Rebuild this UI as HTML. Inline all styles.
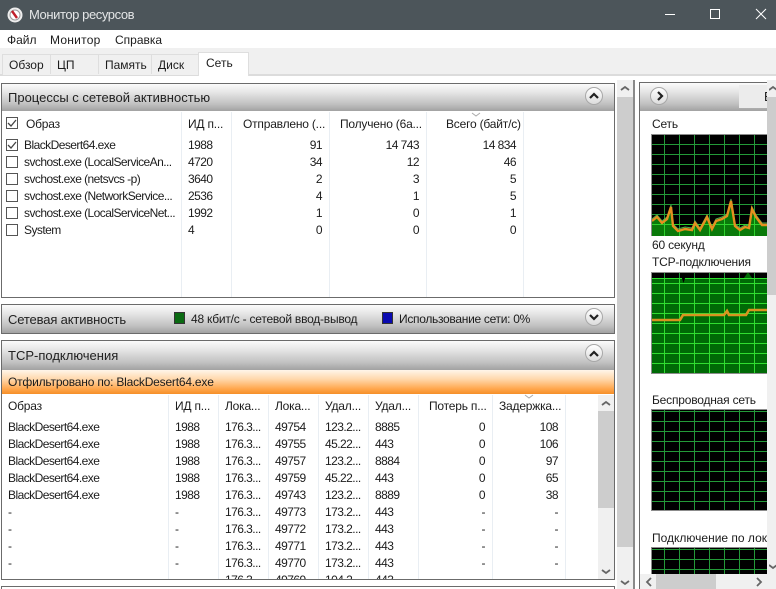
<!DOCTYPE html>
<html style="overflow:hidden;height:589px"><head><meta charset="utf-8"><style>
html,body{margin:0;padding:0}
body{width:776px;height:589px;position:relative;overflow:hidden;background:#fff;font-family:"Liberation Sans",sans-serif;font-size:12px;color:#1c1c1c}
div,span,svg{position:absolute}
#r{left:0;top:0;width:776px;height:589px;overflow:hidden;background:#fff}
.t{white-space:nowrap;line-height:16px;letter-spacing:-.2px}
.rows{left:0;top:0}
.rows .t{letter-spacing:-.55px}
.h{background:linear-gradient(#fbfbfb 0,#e6e6e6 30%,#c0c0c0 75%,#a2a2a2 100%)}
.p{border:1px solid #6b6b6b;box-sizing:border-box;background:#fff}
.ti{font-size:13px;color:#222;white-space:nowrap;line-height:18px}
.sep{width:1px;background:#e9eef3}
.cb{width:12px;height:12px;box-sizing:border-box;border:1px solid #555;background:#fff;left:6px}
.btn{width:18px;height:18px;box-sizing:border-box;border-radius:50%;border:1px solid #a8a8a8;background:linear-gradient(#fff,#dcdcdc)}
.tab{line-height:16px;white-space:nowrap;font-size:12px}
.gd{box-sizing:border-box;background-color:#000;background-image:linear-gradient(90deg,#239a38 1px,transparent 1px),linear-gradient(#239a38 1px,transparent 1px);background-size:15px 10px,15px 10px}
.gg{background-color:#006a06;background-image:linear-gradient(90deg,#30de30 1px,transparent 1px),linear-gradient(#30de30 1px,transparent 1px);background-size:15px 10px,15px 10px}
</style></head><body><div id="r">

<div style="left:0;top:0;width:776px;height:30px;background:#4c555a"></div>
<svg style="left:7px;top:7px" width="16" height="16" viewBox="0 0 16 16"><circle cx="8" cy="8" r="7.5" fill="#eee"/><circle cx="8" cy="8" r="5" fill="#fff" stroke="#999"/><path d="M5 4L10 11" stroke="#c0202a" stroke-width="2.4"/></svg>
<div class="t" style="left:29px;top:7px;color:#e4e6e7;font-size:13px;letter-spacing:-.42px">Монитор ресурсов</div>
<div style="left:665px;top:14px;width:10px;height:1px;background:#fff"></div>
<div style="left:710px;top:9px;width:8px;height:8px;border:1px solid #fff"></div>
<svg style="left:755px;top:8px" width="12" height="12" viewBox="0 0 12 12"><path d="M1 1L11 11M11 1L1 11" stroke="#fff" stroke-width="1"/></svg>

<div class="t" style="left:7px;top:32px;letter-spacing:0">Файл</div>
<div class="t" style="left:50px;top:32px;letter-spacing:.25px">Монитор</div>
<div class="t" style="left:115px;top:32px;letter-spacing:0">Справка</div>

<div style="left:0;top:48px;width:776px;height:27px;background:#f0f0f0"></div>
<div style="left:0;top:74px;width:776px;height:2px;background:#dcdcdc"></div>
<div style="left:2px;top:54px;width:197px;height:20px;background:#f0f0f0;border:1px solid #dedede;border-bottom:0"></div>
<div style="left:50px;top:55px;width:1px;height:19px;background:#dedede"></div>
<div style="left:98px;top:55px;width:1px;height:19px;background:#dedede"></div>
<div style="left:151px;top:55px;width:1px;height:19px;background:#dedede"></div>
<div style="left:198px;top:52px;width:51px;height:24px;background:#fff;border:1px solid #dedede;border-bottom:0;box-sizing:border-box"></div>
<div class="tab" style="left:9px;top:57px">Обзор</div>
<div class="tab" style="left:57px;top:57px">ЦП</div>
<div class="tab" style="left:105px;top:57px">Память</div>
<div class="tab" style="left:158px;top:57px">Диск</div>
<div class="tab" style="left:206px;top:55px">Сеть</div>

<!-- panel 1 -->
<div class="p" style="left:1px;top:83px;width:614px;height:215px"></div>
<div class="h" style="left:2px;top:84px;width:612px;height:27px"></div>
<div class="ti" style="left:8px;top:89px">Процессы с сетевой активностью</div>
<div class="btn" style="left:585px;top:87px"></div>
<svg style="left:588px;top:91px" width="12" height="9" viewBox="0 0 12 9"><path d="M2 7L6 3L10 7" fill="none" stroke="#222" stroke-width="2.2"/></svg>
<div class="sep" style="left:181px;top:112px;height:185px"></div>
<div class="sep" style="left:231px;top:112px;height:185px"></div>
<div class="sep" style="left:329px;top:112px;height:185px"></div>
<div class="sep" style="left:426px;top:112px;height:185px"></div>
<div class="sep" style="left:523px;top:112px;height:185px"></div>

<div class="cb" style="top:117px"></div>
<svg style="left:6px;top:117px" width="12" height="12" viewBox="0 0 12 12"><path d="M2 6L5 9L10 3" fill="none" stroke="#444" stroke-width="1.3"/></svg>
<div class="t" style="left:26px;top:116px">Образ</div>
<div class="t" style="left:188px;top:116px">ИД п...</div>
<div class="t" style="left:243px;top:116px">Отправлено (...</div>
<div class="t" style="left:340px;top:116px">Получено (6а...</div>
<div class="t" style="left:446px;top:116px">Всего (байт/с)</div>
<svg style="left:471px;top:112px" width="10" height="5"><path d="M1 1L5 4L9 1" fill="none" stroke="#aaa"/></svg>

<div class="cb" style="top:139px"></div>
<svg style="left:6px;top:139px" width="12" height="12" viewBox="0 0 12 12"><path d="M2 6L5 9L10 3" fill="none" stroke="#444" stroke-width="1.3"/></svg>
<div class="cb" style="top:156px"></div>
<div class="cb" style="top:173px"></div>
<div class="cb" style="top:190px"></div>
<div class="cb" style="top:207px"></div>
<div class="cb" style="top:224px"></div>

<div class="rows">
<div class="t" style="left:24px;top:137px">BlackDesert64.exe</div><div class="t" style="left:188px;top:137px">1988</div>
<div class="t" style="left:300px;width:22px;text-align:right;top:137px">91</div><div class="t" style="left:379px;width:40px;text-align:right;top:137px">14 743</div><div class="t" style="left:476px;width:40px;text-align:right;top:137px">14 834</div>
<div class="t" style="left:24px;top:154px">svchost.exe (LocalServiceAn...</div><div class="t" style="left:188px;top:154px">4720</div>
<div class="t" style="left:300px;width:22px;text-align:right;top:154px">34</div><div class="t" style="left:379px;width:40px;text-align:right;top:154px">12</div><div class="t" style="left:476px;width:40px;text-align:right;top:154px">46</div>
<div class="t" style="left:24px;top:171px">svchost.exe (netsvcs -p)</div><div class="t" style="left:188px;top:171px">3640</div>
<div class="t" style="left:300px;width:22px;text-align:right;top:171px">2</div><div class="t" style="left:379px;width:40px;text-align:right;top:171px">3</div><div class="t" style="left:476px;width:40px;text-align:right;top:171px">5</div>
<div class="t" style="left:24px;top:188px">svchost.exe (NetworkService...</div><div class="t" style="left:188px;top:188px">2536</div>
<div class="t" style="left:300px;width:22px;text-align:right;top:188px">4</div><div class="t" style="left:379px;width:40px;text-align:right;top:188px">1</div><div class="t" style="left:476px;width:40px;text-align:right;top:188px">5</div>
<div class="t" style="left:24px;top:205px">svchost.exe (LocalServiceNet...</div><div class="t" style="left:188px;top:205px">1992</div>
<div class="t" style="left:300px;width:22px;text-align:right;top:205px">1</div><div class="t" style="left:379px;width:40px;text-align:right;top:205px">0</div><div class="t" style="left:476px;width:40px;text-align:right;top:205px">1</div>
<div class="t" style="left:24px;top:222px">System</div><div class="t" style="left:188px;top:222px">4</div>
<div class="t" style="left:300px;width:22px;text-align:right;top:222px">0</div><div class="t" style="left:379px;width:40px;text-align:right;top:222px">0</div><div class="t" style="left:476px;width:40px;text-align:right;top:222px">0</div>
</div>

<!-- panel 2 -->
<div class="p" style="left:1px;top:304px;width:614px;height:30px"></div>
<div class="h" style="left:2px;top:305px;width:612px;height:28px"></div>
<div class="ti" style="left:8px;top:311px;letter-spacing:-.15px">Сетевая активность</div>
<div style="left:174px;top:312px;width:11px;height:12px;background:#0a6a12;border:1px solid #333;box-sizing:border-box"></div>
<div class="t" style="left:191px;top:311px;letter-spacing:-.23px">48 кбит/с - сетевой ввод-вывод</div>
<div style="left:382px;top:312px;width:11px;height:12px;background:#0a0ab0;border:1px solid #333;box-sizing:border-box"></div>
<div class="t" style="left:399px;top:311px;letter-spacing:-.3px">Использование сети: 0%</div>
<div class="btn" style="left:585px;top:308px"></div>
<svg style="left:588px;top:313px" width="12" height="9" viewBox="0 0 12 9"><path d="M2 2L6 6L10 2" fill="none" stroke="#222" stroke-width="2.2"/></svg>

<!-- panel 3 -->
<div class="p" style="left:1px;top:340px;width:614px;height:240px"></div>
<div class="h" style="left:2px;top:341px;width:612px;height:29px"></div>
<div class="ti" style="left:8px;top:347px">TCP-подключения</div>
<div class="btn" style="left:585px;top:344px"></div>
<svg style="left:588px;top:349px" width="12" height="9" viewBox="0 0 12 9"><path d="M2 7L6 3L10 7" fill="none" stroke="#222" stroke-width="2.2"/></svg>
<div style="left:2px;top:370px;width:612px;height:24px;background:linear-gradient(#fff6ea 0,#ffd6a8 40%,#ffa54a 80%,#f58f28 100%)"></div>
<div class="t" style="left:8px;top:374px">Отфильтровано по: BlackDesert64.exe</div>

<div class="sep" style="left:168px;top:395px;height:184px"></div>
<div class="sep" style="left:218px;top:395px;height:184px"></div>
<div class="sep" style="left:268px;top:395px;height:184px"></div>
<div class="sep" style="left:318px;top:395px;height:184px"></div>
<div class="sep" style="left:368px;top:395px;height:184px"></div>
<div class="sep" style="left:418px;top:395px;height:184px"></div>
<div class="sep" style="left:492px;top:395px;height:184px"></div>
<div class="sep" style="left:565px;top:395px;height:184px"></div>

<div class="t" style="left:8px;top:398px">Образ</div>
<div class="t" style="left:175px;top:398px">ИД п...</div>
<div class="t" style="left:225px;top:398px">Лока...</div>
<div class="t" style="left:275px;top:398px">Лока...</div>
<div class="t" style="left:325px;top:398px">Удал...</div>
<div class="t" style="left:375px;top:398px">Удал...</div>
<div class="t" style="left:429px;top:398px">Потерь п...</div>
<div class="t" style="left:499px;top:398px">Задержка...</div>
<svg style="left:524px;top:394px" width="10" height="5"><path d="M1 1L5 4L9 1" fill="none" stroke="#aaa"/></svg>

<div class="rows" style="left:2px;top:395px;width:596px;height:184px;overflow:hidden">
<div class="t" style="left:6px;top:24px">BlackDesert64.exe</div><div class="t" style="left:173px;top:24px">1988</div><div class="t" style="left:223px;top:24px">176.3...</div><div class="t" style="left:273px;top:24px">49754</div><div class="t" style="left:323px;top:24px">123.2...</div><div class="t" style="left:373px;top:24px">8885</div><div class="t" style="right:113px;top:24px">0</div><div class="t" style="right:40px;top:24px">108</div>
<div class="t" style="left:6px;top:41px">BlackDesert64.exe</div><div class="t" style="left:173px;top:41px">1988</div><div class="t" style="left:223px;top:41px">176.3...</div><div class="t" style="left:273px;top:41px">49755</div><div class="t" style="left:323px;top:41px">45.22...</div><div class="t" style="left:373px;top:41px">443</div><div class="t" style="right:113px;top:41px">0</div><div class="t" style="right:40px;top:41px">106</div>
<div class="t" style="left:6px;top:58px">BlackDesert64.exe</div><div class="t" style="left:173px;top:58px">1988</div><div class="t" style="left:223px;top:58px">176.3...</div><div class="t" style="left:273px;top:58px">49757</div><div class="t" style="left:323px;top:58px">123.2...</div><div class="t" style="left:373px;top:58px">8884</div><div class="t" style="right:113px;top:58px">0</div><div class="t" style="right:40px;top:58px">97</div>
<div class="t" style="left:6px;top:75px">BlackDesert64.exe</div><div class="t" style="left:173px;top:75px">1988</div><div class="t" style="left:223px;top:75px">176.3...</div><div class="t" style="left:273px;top:75px">49759</div><div class="t" style="left:323px;top:75px">45.22...</div><div class="t" style="left:373px;top:75px">443</div><div class="t" style="right:113px;top:75px">0</div><div class="t" style="right:40px;top:75px">65</div>
<div class="t" style="left:6px;top:92px">BlackDesert64.exe</div><div class="t" style="left:173px;top:92px">1988</div><div class="t" style="left:223px;top:92px">176.3...</div><div class="t" style="left:273px;top:92px">49743</div><div class="t" style="left:323px;top:92px">123.2...</div><div class="t" style="left:373px;top:92px">8889</div><div class="t" style="right:113px;top:92px">0</div><div class="t" style="right:40px;top:92px">38</div>
<div class="t" style="left:6px;top:109px">-</div><div class="t" style="left:173px;top:109px">-</div><div class="t" style="left:223px;top:109px">176.3...</div><div class="t" style="left:273px;top:109px">49773</div><div class="t" style="left:323px;top:109px">173.2...</div><div class="t" style="left:373px;top:109px">443</div><div class="t" style="right:113px;top:109px">-</div><div class="t" style="right:40px;top:109px">-</div>
<div class="t" style="left:6px;top:126px">-</div><div class="t" style="left:173px;top:126px">-</div><div class="t" style="left:223px;top:126px">176.3...</div><div class="t" style="left:273px;top:126px">49772</div><div class="t" style="left:323px;top:126px">173.2...</div><div class="t" style="left:373px;top:126px">443</div><div class="t" style="right:113px;top:126px">-</div><div class="t" style="right:40px;top:126px">-</div>
<div class="t" style="left:6px;top:143px">-</div><div class="t" style="left:173px;top:143px">-</div><div class="t" style="left:223px;top:143px">176.3...</div><div class="t" style="left:273px;top:143px">49771</div><div class="t" style="left:323px;top:143px">173.2...</div><div class="t" style="left:373px;top:143px">443</div><div class="t" style="right:113px;top:143px">-</div><div class="t" style="right:40px;top:143px">-</div>
<div class="t" style="left:6px;top:160px">-</div><div class="t" style="left:173px;top:160px">-</div><div class="t" style="left:223px;top:160px">176.3...</div><div class="t" style="left:273px;top:160px">49770</div><div class="t" style="left:323px;top:160px">173.2...</div><div class="t" style="left:373px;top:160px">443</div><div class="t" style="right:113px;top:160px">-</div><div class="t" style="right:40px;top:160px">-</div>
<div class="t" style="left:223px;top:177px">176.3...</div><div class="t" style="left:273px;top:177px">49769</div><div class="t" style="left:323px;top:177px">104.2...</div><div class="t" style="left:373px;top:177px">443</div>
</div>

<!-- inner scrollbar -->
<div style="left:598px;top:395px;width:16px;height:184px;background:#f0f0f0"></div>
<div style="left:598px;top:411px;width:16px;height:97px;background:#cdcdcd"></div>
<svg style="left:600px;top:400px" width="12" height="7"><path d="M2 5L6 2L10 5" fill="none" stroke="#666" stroke-width="1.8"/></svg>
<svg style="left:600px;top:568px" width="12" height="7"><path d="M2 2L6 5L10 2" fill="none" stroke="#666" stroke-width="1.8"/></svg>

<!-- panel 4 top -->
<div class="p" style="left:1px;top:586px;width:614px;height:10px"></div>

<!-- main scrollbar -->
<div style="left:617px;top:80px;width:16px;height:509px;background:#f0f0f0"></div>
<div style="left:617px;top:97px;width:16px;height:450px;background:#cdcdcd"></div>
<svg style="left:619px;top:85px" width="12" height="7"><path d="M2 5L6 2L10 5" fill="none" stroke="#666" stroke-width="1.8"/></svg>
<svg style="left:619px;top:579px" width="12" height="7"><path d="M2 2L6 5L10 2" fill="none" stroke="#666" stroke-width="1.8"/></svg>
<div style="left:633px;top:80px;width:2px;height:509px;background:#8a8a8a"></div>

<!-- right panel -->
<div class="p" style="left:639px;top:82px;width:150px;height:520px"></div>
<div class="h" style="left:640px;top:83px;width:136px;height:28px"></div>
<div class="btn" style="left:650px;top:87px"></div>
<svg style="left:654px;top:90px" width="12" height="12" viewBox="0 0 12 12"><path d="M4 2L8 6L4 10" fill="none" stroke="#222" stroke-width="2.2"/></svg>
<div style="left:739px;top:85px;width:37px;height:23px;background:#ececec"></div>
<div class="t" style="left:764px;top:89px;font-size:13px">В</div>

<div class="t" style="left:652px;top:116px">Сеть</div>
<div class="gd" style="left:651px;top:134px;width:116px;height:102px;background-position:13px 0,0 0"></div>
<svg style="left:651px;top:134px" width="116" height="102" viewBox="651 134 116 102">
<polygon points="652,221 657,217 662,223 667,219 671,207 673,226 678,231 685,229 692,230 695,223 700,230 707,217 712,229 716,221 722,219 727,216 731,201 735,226 740,230 745,227 749,228 752,209 756,217 762,225 767,225 767,236 652,236" fill="#0a7a0a"/>
<path d="M664.5 218V236M679.5 228V236M694.5 224V236M709.5 220V236M724.5 218V236M739.5 228V236M754.5 212V236M652 224.5H767" stroke="#2ed12e" stroke-width="1"/>
<polyline points="652,219 657,215 662,221 667,217 671,205 673,224 678,229 685,227 692,228 695,221 700,228 707,215 712,227 716,219 722,217 727,214 731,199 735,224 740,228 745,225 749,226 752,207 756,215 762,223 767,223" fill="none" stroke="#4fb04f" stroke-width="1"/>
<polyline points="652,221 657,217 662,223 667,219 671,207 673,226 678,231 685,229 692,230 695,223 700,230 707,217 712,229 716,221 722,219 727,216 731,201 735,226 740,230 745,227 749,228 752,209 756,217 762,225 767,225" fill="none" stroke="#e6901f" stroke-width="2.4"/>
<path d="M651 134.5H767M651.5 134V236" stroke="#8c8c8c" stroke-width="1"/>
</svg>
<div class="t" style="left:652px;top:237px">60 секунд</div>
<div class="t" style="left:652px;top:254px">TCP-подключения</div>
<div class="gd" style="left:651px;top:272px;width:116px;height:6px;background-position:13px 0,0 9px"></div>
<div class="gg" style="left:651px;top:278px;width:116px;height:96px;background-position:13px 0,0 5px"></div>
<div style="left:651px;top:278px;width:116px;height:1px;background:#30de30"></div>
<svg style="left:651px;top:272px" width="116" height="102" viewBox="651 272 116 102">
<path d="M680 272H687L683.500 283Z" fill="#000"/>
<path d="M744 278H752L748 272Z" fill="#006a06"/>
<polyline points="652,320 680,320 683,315 724,315 727,311 729,315 746,315 749,310 767,310" fill="none" stroke="#d8941f" stroke-width="2.6"/>
<path d="M651 272.500H767M651.500 272V374M651 373.500H767" stroke="#8c8c8c" stroke-width="1"/>
</svg>
<div class="t" style="left:652px;top:392px">Беспроводная сеть</div>
<div class="gd" style="left:651px;top:409px;width:116px;height:102px;background-position:13px 0,0 2px"></div>
<svg style="left:651px;top:409px" width="116" height="102" viewBox="651 409 116 102">
<path d="M651 409.500H767M651.500 409V511M651 510.500H767" stroke="#8c8c8c" stroke-width="1"/>
</svg>
<div class="t" style="left:652px;top:530px;width:115px;overflow:hidden;letter-spacing:0">Подключение по локальной</div>
<div class="gd" style="left:651px;top:547px;width:116px;height:27px;background-position:13px 0,0 2px"></div>
<svg style="left:651px;top:547px" width="116" height="27" viewBox="651 547 116 27">
<path d="M651 547.500H767M651.500 547V574" stroke="#8c8c8c" stroke-width="1"/>
</svg>

<!-- right scrollbars -->
<div style="left:767px;top:80px;width:9px;height:494px;background:#f0f0f0"></div>
<div style="left:767px;top:97px;width:9px;height:198px;background:#cdcdcd"></div>
<svg style="left:769px;top:85px" width="7" height="7"><path d="M0 5L4 2L8 5" fill="none" stroke="#666" stroke-width="1.8"/></svg>
<svg style="left:769px;top:563px" width="7" height="7"><path d="M0 2L4 5L8 2" fill="none" stroke="#666" stroke-width="1.8"/></svg>
<div style="left:640px;top:574px;width:136px;height:15px;background:#f0f0f0"></div>
<div style="left:656px;top:574px;width:60px;height:15px;background:#cdcdcd"></div>
<svg style="left:644px;top:576px" width="10" height="12"><path d="M7 2L3 6L7 10" fill="none" stroke="#666" stroke-width="1.8"/></svg>
<svg style="left:754px;top:576px" width="10" height="12"><path d="M3 2L7 6L3 10" fill="none" stroke="#666" stroke-width="1.8"/></svg>
</div></body></html>
